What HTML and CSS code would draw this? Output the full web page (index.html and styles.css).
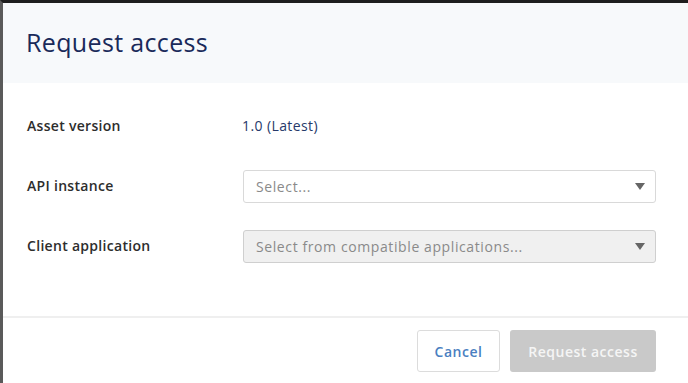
FILE: index.html
```html
<!DOCTYPE html>
<html>
<head>
<meta charset="utf-8">
<link rel="stylesheet" href="styles.css">
</head>
<body>
<div class="frame">
  <div class="header">
    <h1 class="title">Request access</h1>
  </div>
  <div class="content">
    <div class="row">
      <div class="label">Asset version</div>
      <div class="value">1.0 (Latest)</div>
    </div>
    <div class="row">
      <div class="label">API instance</div>
      <div class="select">
        <span class="placeholder">Select...</span>
        <span class="caret"></span>
      </div>
    </div>
    <div class="row">
      <div class="label">Client application</div>
      <div class="select disabled">
        <span class="placeholder">Select from compatible applications...</span>
        <span class="caret"></span>
      </div>
    </div>
  </div>
  <div class="footer">
    <button class="btn cancel">Cancel</button>
    <button class="btn primary">Request access</button>
  </div>
</div>
</body>
</html>
```

FILE: styles.css
```css
html, body {
  margin: 0;
  padding: 0;
  background: #fff;
}
body {
  font-family: "Open Sans", "Noto Sans", sans-serif;
  color: #333;
  overflow: hidden;
}
.frame {
  border-top: 3px solid #1e1e1e;
  border-left: 3px solid #5a5a5a;
  height: 383px;
  box-sizing: border-box;
  display: flex;
  flex-direction: column;
}
.header {
  background: #f7f9fb;
  height: 80px;
  display: flex;
  align-items: center;
  padding-left: 23px;
  flex-shrink: 0;
}
.title {
  margin: 0;
  font-size: 25px;
  font-weight: 400;
  color: #1a2a5a;
  letter-spacing: 0.35px;
  position: relative;
  top: -1px;
}
.content {
  padding: 27px 32px 53px 24px;
  display: flex;
  flex-direction: column;
  gap: 27px;
  border-bottom: 2px solid #efefef;
}
.row {
  display: grid;
  grid-template-columns: 215px 1fr;
  align-items: center;
  height: 33px;
}
.label {
  font-size: 14px;
  font-weight: 600;
  color: #2d2d2d;
  letter-spacing: 0.3px;
  position: relative;
  top: -1px;
}
.value {
  font-size: 14px;
  font-weight: 500;
  color: #26396a;
  letter-spacing: 0.4px;
  position: relative;
  top: -1px;
}
.select {
  height: 33px;
  box-sizing: border-box;
  border: 1px solid #d9d9d9;
  border-radius: 3px;
  background: #fff;
  display: flex;
  align-items: center;
  justify-content: space-between;
  padding: 0 10px 0 12px;
  margin-left: 1px;
}
.select.disabled {
  background: #f0f0f0;
  border-color: #cfcfcf;
}
.placeholder {
  font-size: 14px;
  color: #8a8a8a;
  letter-spacing: 0.6px;
}
.caret {
  width: 0;
  height: 0;
  border-left: 5px solid transparent;
  border-right: 5px solid transparent;
  border-top: 7px solid #666;
}
.footer {
  display: flex;
  justify-content: flex-end;
  gap: 10px;
  padding: 12px 32px 0 0;
}
.btn {
  height: 42px;
  border-radius: 3px;
  font-family: "Open Sans", "Noto Sans", sans-serif;
  font-size: 14px;
  font-weight: 600;
  letter-spacing: 0.5px;
  cursor: pointer;
  padding: 0;
}
.cancel {
  width: 83px;
  background: #fff;
  border: 1px solid #dcdcdc;
  color: #4a7fc1;
}
.primary {
  width: 146px;
  background: #c9c9c9;
  border: none;
  color: #f5f5f5;
}
```
